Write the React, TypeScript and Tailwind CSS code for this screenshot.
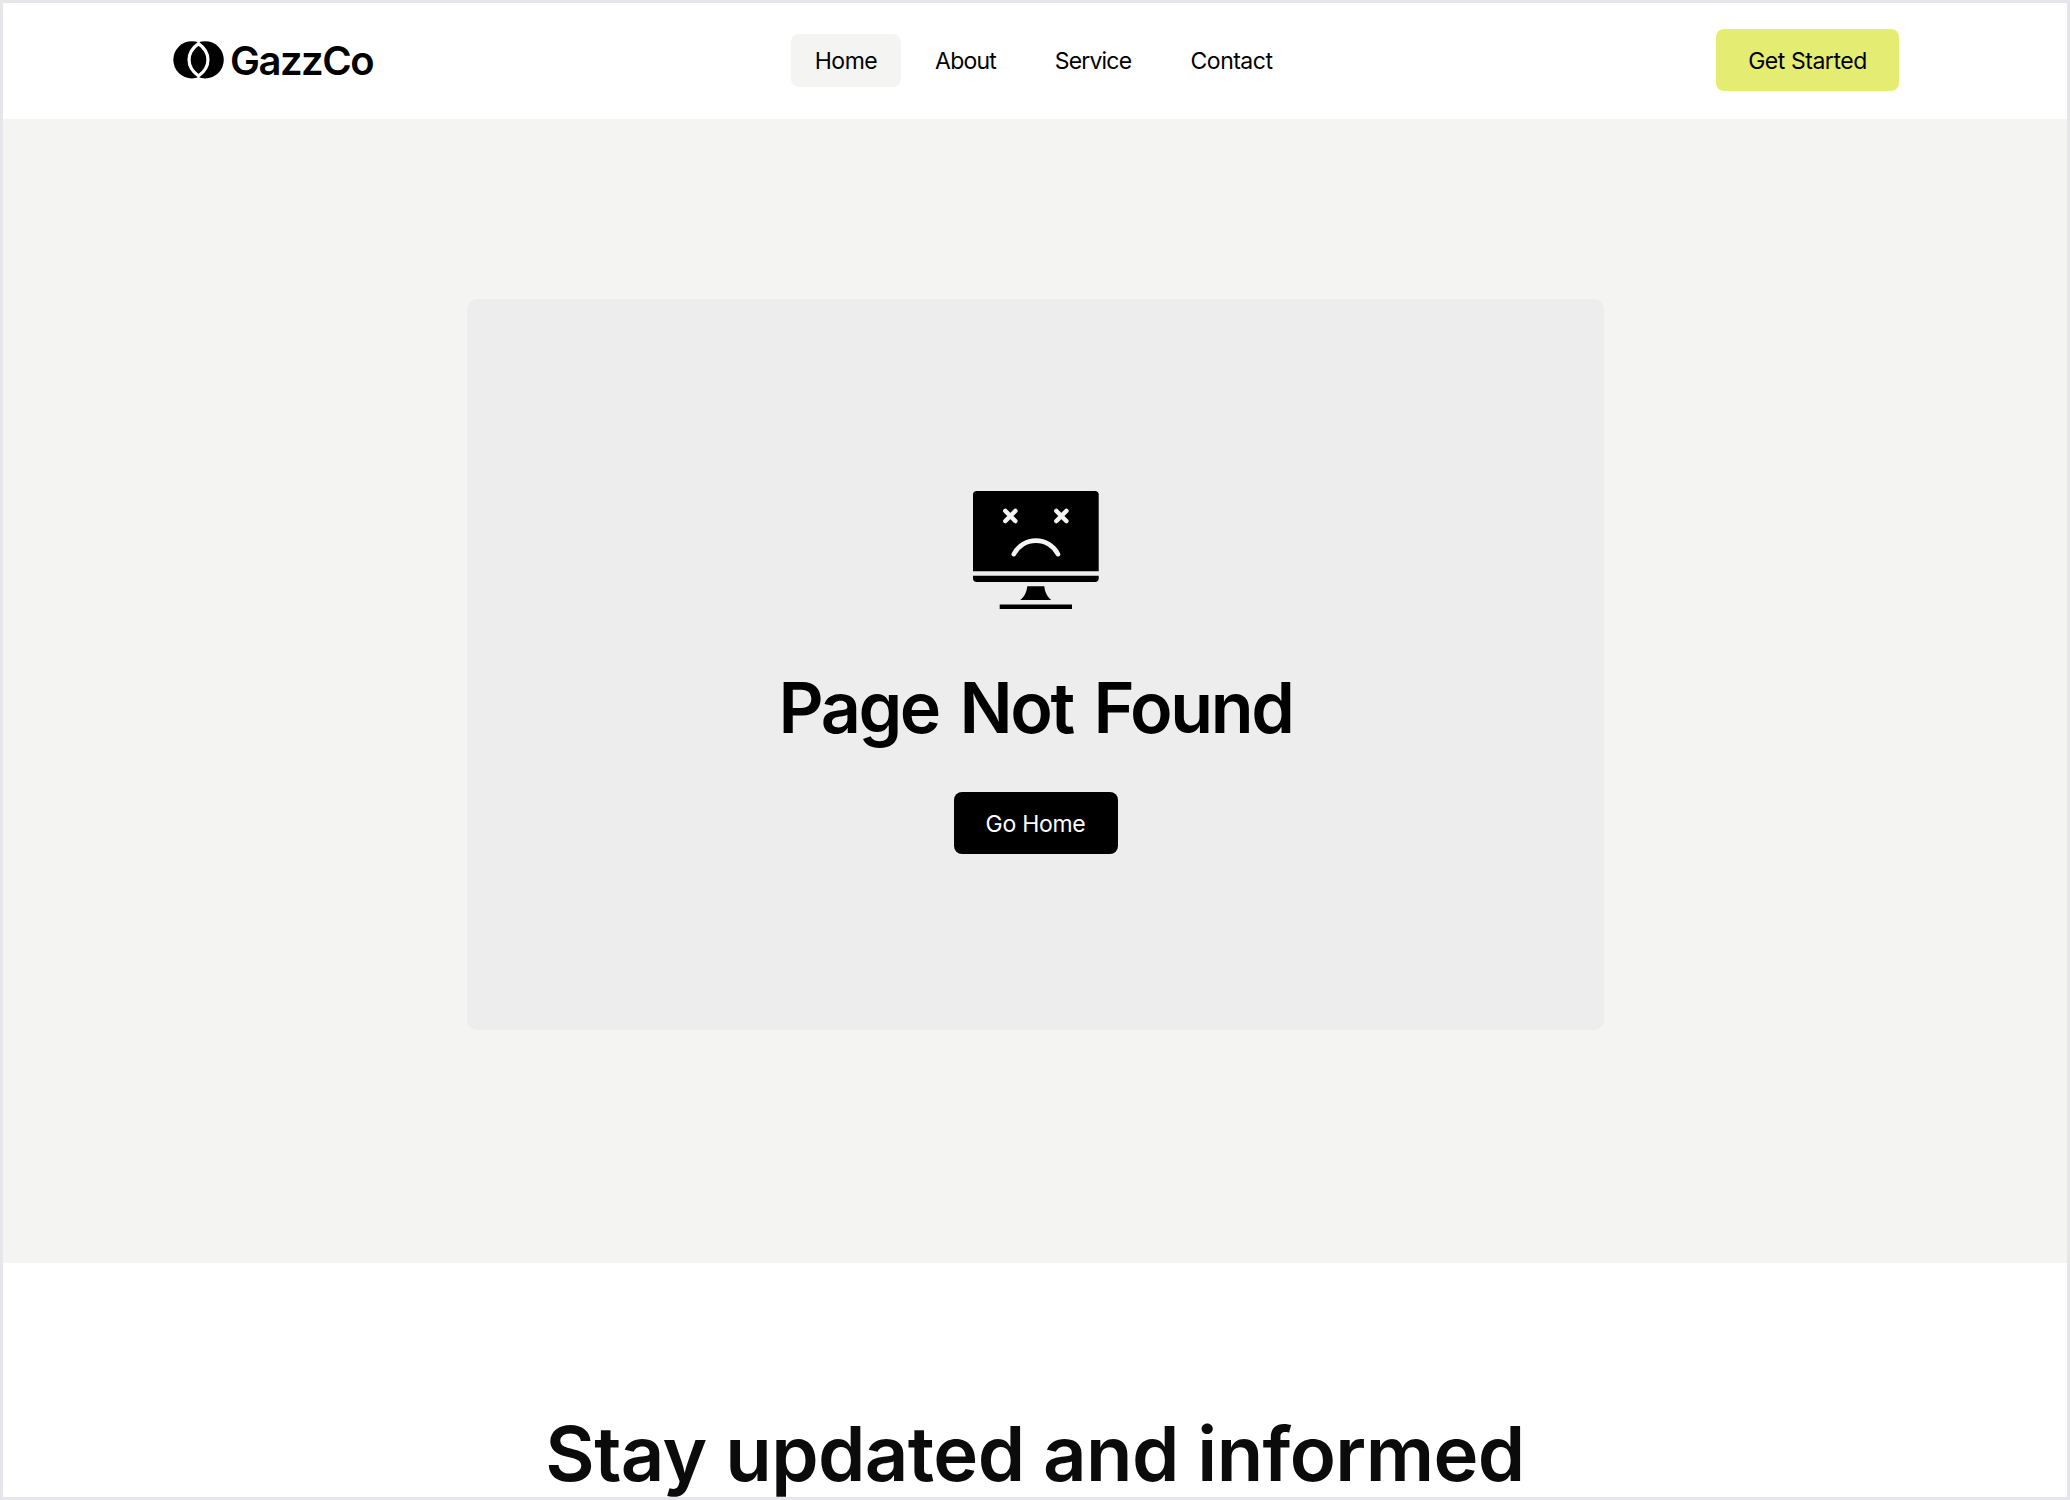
const navItems = [
  { label: "Home", className: "w-[110px] tracking-[-0.5px] bg-[#f4f4f2]" },
  { label: "About", className: "w-[111px] tracking-[-0.8px]" },
  { label: "Service", className: "w-[126px] tracking-[-0.8px]" },
  { label: "Contact", className: "w-[133px] tracking-[-0.5px]" },
];

const Logo = () => (
  <a href="#" className="flex w-[618px] items-center">
    <svg width="52" height="38" viewBox="0 0 52 38" fill="none">
      <circle cx="18.9" cy="18.8" r="18.6" fill="#000" />
      <circle cx="32.2" cy="18.8" r="18.6" fill="#000" />
      <path
        d="M25.5 2.6C12.9 11.5 12.9 26.1 25.5 35C38.1 26.1 38.1 11.5 25.5 2.6Z"
        stroke="#fff"
        strokeWidth="3.2"
      />
      <path d="M25.5 0V2.5M25.5 35V38" stroke="#fff" strokeWidth="1.6" />
    </svg>
    <span className="ml-[5px] pt-[2px] text-[40px] leading-none font-semibold tracking-[-1.5px]">
      GazzCo
    </span>
  </a>
);

const Header = () => (
  <header className="flex h-[116px] shrink-0 items-center bg-white pr-[168px] pb-[2px] pl-[170px]">
    <Logo />
    <nav className="flex gap-[9px]">
      {navItems.map((item) => (
        <a
          key={item.label}
          href="#"
          className={`flex h-[53px] items-center justify-center rounded-lg pt-[2px] text-[23px] ${item.className}`}
        >
          {item.label}
        </a>
      ))}
    </nav>
    <button className="ml-auto h-[62px] w-[183px] rounded-lg bg-[#e4ed71] pt-[2px] text-[23px] tracking-[-0.45px]">
      Get Started
    </button>
  </header>
);

const SadMonitor = () => (
  <svg width="126" height="118" viewBox="0 0 126 118" fill="none">
    <path
      d="M3.5 0H122.2C124.2 0 125.7 1.5 125.7 3.5V80.3H0V3.5C0 1.5 1.5 0 3.5 0Z"
      fill="#000"
    />
    <path
      d="M0 84.7H125.7V87.6C125.7 89.6 124.2 91 122.2 91H3.5C1.5 91 0 89.6 0 87.6V84.7Z"
      fill="#000"
    />
    <path
      d="M54.3 95.3H71.3C72 101 74 106 78.4 109H47.2C51.6 106 53.6 101 54.3 95.3Z"
      fill="#000"
    />
    <path d="M26.7 113.4H99V118H26.7Z" fill="#000" />
    <g stroke="#f4f4f2" strokeWidth="4.6" strokeLinecap="round">
      <path d="M32.4 20L42.3 30M42.3 20L32.4 30" />
      <path d="M83.4 20L93.3 30M93.3 20L83.4 30" />
      <path d="M40.8 63.2A24.8 24.8 0 0 1 85 63.2" />
    </g>
  </svg>
);

const NotFound = () => (
  <main className="flex h-[1144px] shrink-0 items-start justify-center bg-[#f4f4f2] pt-[180px] pl-[1px]">
    <section className="flex h-[731px] w-[1137px] flex-col items-center rounded-[10px] bg-[#ededed] pt-[192px]">
      <SadMonitor />
      <h1 className="mt-[59px] text-[70px] leading-[80px] font-semibold tracking-[-2.4px] [word-spacing:5.5px]">
        Page Not Found
      </h1>
      <button className="mt-[44px] h-[62px] w-[164px] rounded-lg bg-black pt-[2px] text-[23px] tracking-[-0.3px] text-white">
        Go Home
      </button>
    </section>
  </main>
);

export default function App() {
  return (
    <div className="flex h-[1500px] w-[2070px] flex-col overflow-hidden border-[3px] border-[#e5e5ea] bg-white font-['Inter',sans-serif] text-black">
      <Header />
      <NotFound />
      <footer className="pt-[145px] text-center">
        <h2 className="text-[76px] leading-[90px] font-semibold tracking-[-0.6px] text-[#0b0b0b]">
          Stay updated and informed
        </h2>
      </footer>
    </div>
  );
}
